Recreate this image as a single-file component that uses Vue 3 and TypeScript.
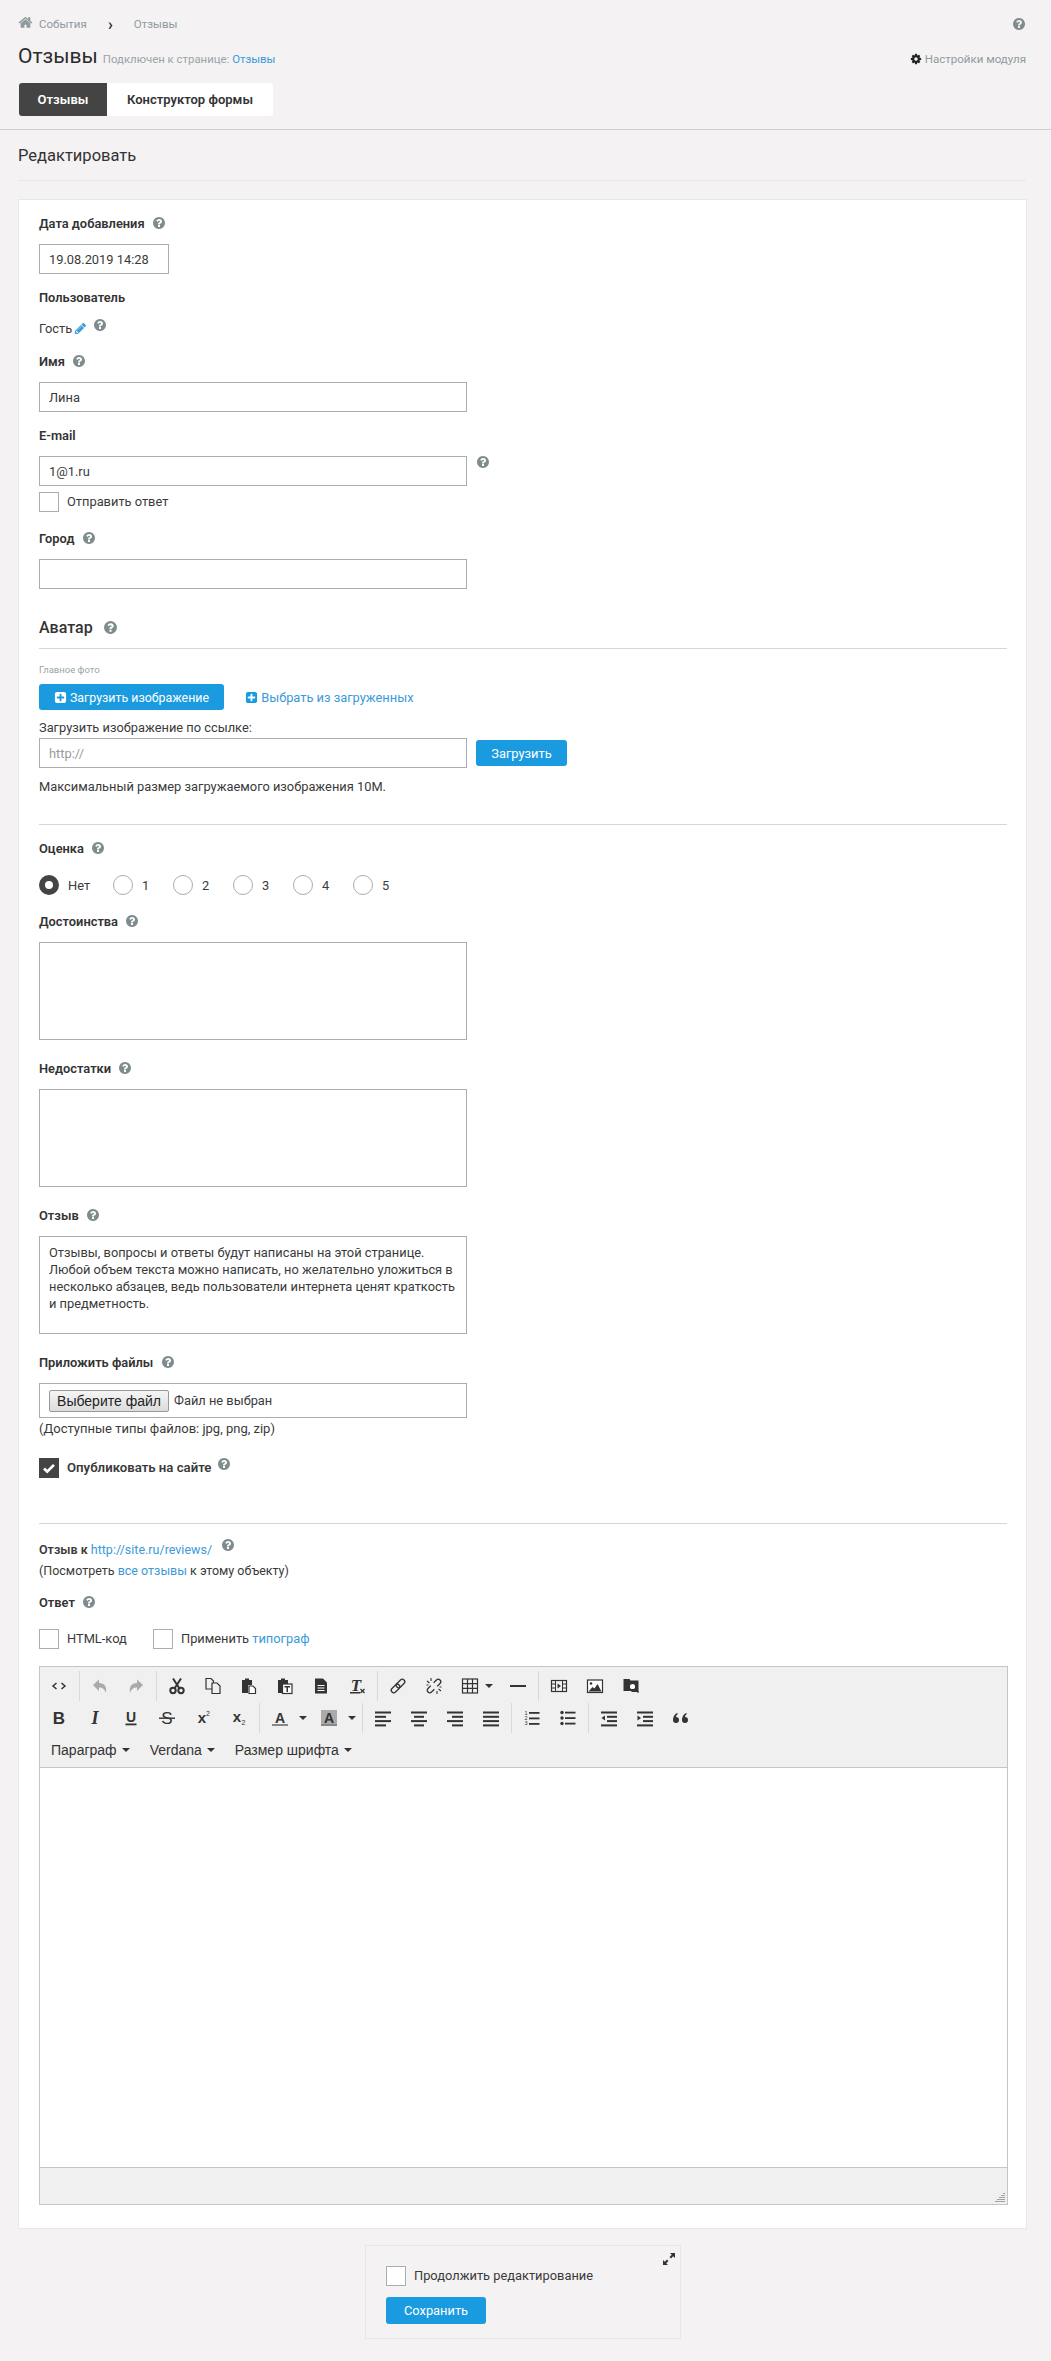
<script setup lang="ts">
const helpPath =
  'M1024 1376v-192q0-14-9-23t-23-9h-192q-14 0-23 9t-9 23v192q0 14 9 23t23 9h192q14 0 23-9t9-23zm256-672q0-88-55.500-163t-138.500-116-170-41q-243 0-371 213-15 24 8 42l132 100q7 6 19 6 16 0 25-12 53-68 86-92 34-24 86-24 48 0 85.500 26t37.500 59q0 38-20 61t-68 45q-63 28-115.500 86.500t-52.500 125.500v36q0 14 9 23t23 9h192q14 0 23-9t9-23q0-19 21.500-49.500t54.500-49.500q32-18 49-28.500t46-35 44.500-48 28-60.500 12.500-81zm384 192q0 209-103 385.500t-279.500 279.500-385.500 103-385.500-103-279.500-279.500-103-385.500 103-385.500 279.500-279.500 385.500-103 385.500 103 279.500 279.500 103 385.500z'
const homePath =
  'M1472 992v480q0 26-19 45t-45 19h-384v-384h-256v384h-384q-26 0-45-19t-19-45v-480q0-1 .5-3t.5-3l575-474 575 474q1 2 1 6zm223-69l-62 74q-8 9-21 11h-3q-13 0-21-7l-692-577-692 577q-12 8-24 7-13-2-21-11l-62-74q-8-10-7-23.500t11-21.500l719-599q32-26 76-26t76 26l244 204v-195q0-14 9-23t23-9h192q14 0 23 9t9 23v408l219 182q10 8 11 21.500t-7 23.500z'
const cogPath =
  'M1152 896q0-106-75-181t-181-75-181 75-75 181 75 181 181 75 181-75 75-181zm512-109v222q0 12-8 23t-20 13l-185 28q-19 54-39 91 35 50 107 138 10 12 10 25t-9 23q-27 37-99 108t-94 71q-12 0-26-9l-138-108q-44 23-91 38-16 136-29 186-7 28-36 28h-222q-14 0-24.500-8.500t-11.500-21.500l-28-184q-49-16-90-37l-141 107q-10 9-25 9-14 0-25-11-126-114-165-168-7-10-7-23 0-12 8-23 15-21 51-66.500t54-70.500q-27-50-41-99l-183-27q-13-2-21-12.500t-8-23.500v-222q0-12 8-23t19-13l186-28q14-46 39-92-40-57-107-138-10-12-10-24 0-10 9-23 26-36 98.500-107.500t94.500-71.500q13 0 26 10l138 107q44-23 91-38 16-136 29-186 7-28 36-28h222q14 0 24.500 8.500t11.500 21.500l28 184q49 16 90 37l142-107q9-9 24-9 13 0 25 10 129 119 165 170 7 8 7 22 0 12-8 23-15 21-51 66.500t-54 70.500q26 50 41 98l183 28q13 2 21 12.500t8 23.500z'
const pencilPath =
  'M491 1536l91-91-235-235-91 91v107h128v128h107zm523-928q0-22-22-22-10 0-17 7l-542 542q-7 7-7 17 0 22 22 22 10 0 17-7l542-542q7-7 7-17zm-54-192l416 416-832 832h-416v-416zm683 96q0 53-37 90l-166 166-416-416 166-165q36-38 90-38 53 0 91 38l235 234q37 39 37 91z'
const plusPath =
  'M1408 960v-128q0-26-19-45t-45-19h-320v-320q0-26-19-45t-45-19h-128q-26 0-45 19t-19 45v320h-320q-26 0-45 19t-19 45v128q0 26 19 45t45 19h320v320q0 26 19 45t45 19h128q26 0 45-19t19-45v-320h320q26 0 45-19t19-45zm256-544v960q0 119-84.500 203.500t-203.500 84.500h-960q-119 0-203.500-84.500t-84.500-203.500v-960q0-119 84.500-203.500t203.500-84.500h960q119 0 203.500 84.500t84.500 203.500z'

const reviewText =
  'Отзывы, вопросы и ответы будут написаны на этой странице.\n' +
  'Любой объем текста можно написать, но желательно уложиться в\n' +
  'несколько абзацев, ведь пользователи интернета ценят краткость\n' +
  'и предметность.'

const ratings = ['1', '2', '3', '4', '5']

const bars = (rows: Array<[number, number]>) =>
  rows.map(([x, w], i) => `<rect x="${x}" y="${3.5 + i * 4.3}" width="${w}" height="2" fill="#333"/>`).join('')

const letter = (ch: string, extra = '') =>
  `<text x="10" y="15.500" text-anchor="middle" font-family="Liberation Sans, sans-serif" font-size="17" fill="#333" ${extra}>${ch}</text>`

const clip = '<path d="M3 4h3V2.500h4V4h3v5H9v8H3z" fill="#333"/>'

const icons: Record<string, string> = {
  code: '<path d="M7.500 7 4 10l3.500 3M12.500 7 16 10l-3.500 3" fill="none" stroke="#333" stroke-width="1.500"/>',
  undo: '<path d="M3 9l6-5.500V7c5.500 0 8 3.500 7 10-1.500-4-3.500-5.500-7-5.500V15z" fill="#aaa"/>',
  redo: '<path d="M17 9l-6-5.500V7C5.500 7 3 10.500 4 17c1.500-4 3.500-5.500 7-5.500V15z" fill="#aaa"/>',
  cut: '<g fill="none" stroke="#333" stroke-width="2"><circle cx="6" cy="14.500" r="2.700"/><circle cx="14" cy="14.500" r="2.700"/><path d="M7.500 12.500 14 2.500M12.500 12.500 6 2.500"/></g>',
  copy: '<g fill="#f0f0f0" stroke="#333" stroke-width="1.200"><path d="M3 2.500h5l2.500 2.500v8H3z"/><path d="M9 7h5l3 3v7.500H9z"/></g>',
  paste: clip + '<path d="M10 10h4l2.500 2.500V17.500H10z" fill="#fff" stroke="#333" stroke-width="1.200"/>',
  pastetext:
    clip +
    '<rect x="7.500" y="8" width="9.500" height="9.500" fill="#fff" stroke="#333" stroke-width="1.200"/><path d="M9.500 10h5.500v1.500h-2V16h-1.500v-4.500h-2z" fill="#333"/>',
  doc: '<path d="M4 2.500h8l4 4v11H4z" fill="#333"/><path d="M6.500 9.500h7M6.500 12h7M6.500 14.500h7" stroke="#fff" stroke-width="1.200"/>',
  clear:
    '<text x="9" y="14.500" text-anchor="middle" font-family="Liberation Serif, serif" font-style="italic" font-weight="bold" font-size="17" fill="#333">T</text><rect x="3" y="16" width="10" height="1.500" fill="#333"/><path d="M13.500 13l4 4M17.500 13l-4 4" stroke="#333" stroke-width="1.300"/>',
  link: '<g transform="rotate(-45 10 10)" fill="none" stroke="#333" stroke-width="1.300"><rect x="1.500" y="7.500" width="10" height="5" rx="2.500"/><rect x="8.500" y="7.500" width="10" height="5" rx="2.500"/></g>',
  unlink:
    '<g transform="rotate(-45 10 10)" fill="none" stroke="#333" stroke-width="1.300"><path d="M8 7.500H4a2.500 2.500 0 0 0 0 5h4M12 7.500h4a2.500 2.500 0 0 1 0 5h-4"/></g><path d="M3 5l2.500 2M7 2v3M13 18v-3M17 15l-2.500-2M2.500 9h2M15.500 11h2" stroke="#333" stroke-width="1.100"/>',
  table:
    '<g fill="none" stroke="#333" stroke-width="1.200"><rect x="2.500" y="3" width="15" height="14"/><path d="M2.500 7.700h15M2.500 12.300h15M7.500 3v14M12.500 3v14"/></g>',
  hr: '<rect x="2" y="9" width="16" height="2" fill="#333"/>',
  video:
    '<rect x="2.500" y="4.500" width="15" height="11" fill="none" stroke="#333" stroke-width="1.200"/><path d="M6.500 4.500v11M13.500 4.500v11M2.500 8h4M2.500 12h4M13.500 8h4M13.500 12h4" stroke="#333"/><path d="M8.500 7.500l3.500 2.500-3.500 2.500z" fill="#333"/>',
  image:
    '<rect x="2.500" y="4" width="15" height="12.500" fill="#fff" stroke="#333" stroke-width="1.200"/><circle cx="6" cy="7.500" r="1.300" fill="#333"/><path d="M3.500 15.500l4-4.500 2 1.500 3-4.500 4 7.500z" fill="#333"/>',
  folder:
    '<path d="M2.500 4V3h6l1 1.500h8V16H11l-1-1H2.500z" fill="#333"/><circle cx="11.500" cy="10.500" r="3.200" fill="#fff" stroke="#333" stroke-width="1.200"/><path d="M14 13l3.500 3.500" stroke="#333" stroke-width="1.600"/>',
  bold: letter('B', 'font-weight="bold"'),
  italic:
    '<text x="10" y="15.500" text-anchor="middle" font-family="Liberation Serif, serif" font-style="italic" font-weight="bold" font-size="18" fill="#333">I</text>',
  underline:
    '<text x="10" y="13.500" text-anchor="middle" font-family="Liberation Sans, sans-serif" font-size="14" font-weight="bold" fill="#333">U</text><rect x="4.500" y="15.500" width="11" height="1.800" fill="#333"/>',
  strike: letter('S') + '<rect x="2" y="9.500" width="16" height="1.400" fill="#333"/>',
  sup: '<text x="9" y="15" text-anchor="middle" font-family="Liberation Sans, sans-serif" font-size="15" font-weight="bold" fill="#333">x</text><text x="15" y="8" font-family="Liberation Sans, sans-serif" text-anchor="middle" font-size="7" fill="#333">2</text>',
  sub: '<text x="8" y="14" text-anchor="middle" font-family="Liberation Sans, sans-serif" font-size="15" font-weight="bold" fill="#333">x</text><text x="14.500" y="17" font-family="Liberation Sans, sans-serif" text-anchor="middle" font-size="7" fill="#333">2</text>',
  forecolor:
    '<text x="10" y="14.500" text-anchor="middle" font-family="Liberation Sans, sans-serif" font-size="14" font-weight="bold" fill="#333">A</text><rect x="2" y="16" width="16" height="2" fill="#888"/>',
  backcolor:
    '<rect x="2" y="2" width="16" height="16" fill="#aaa"/><text x="10" y="14.500" text-anchor="middle" font-family="Liberation Sans, sans-serif" font-size="14" font-weight="bold" fill="#333">A</text><rect x="2" y="16" width="16" height="2" fill="#888"/>',
  alignleft: bars([[2, 16], [2, 11], [2, 16], [2, 11]]),
  aligncenter: bars([[2, 16], [5, 10], [2, 16], [5, 10]]),
  alignright: bars([[2, 16], [7, 11], [2, 16], [7, 11]]),
  justify: bars([[2, 16], [2, 16], [2, 16], [2, 16]]),
  ol: '<g font-family="Liberation Sans, sans-serif" font-size="5.500" fill="#333"><text x="2.500" y="7">1</text><text x="2.500" y="12">2</text><text x="2.500" y="17">3</text></g><rect x="7" y="4" width="10.500" height="1.800" fill="#333"/><rect x="7" y="9.500" width="10.500" height="1.800" fill="#333"/><rect x="7" y="15" width="10.500" height="1.800" fill="#333"/>',
  ul: '<circle cx="4" cy="4.500" r="1.700" fill="#333"/><circle cx="4" cy="10" r="1.700" fill="#333"/><circle cx="4" cy="15.500" r="1.700" fill="#333"/><rect x="7" y="3.700" width="10.500" height="1.800" fill="#333"/><rect x="7" y="9.200" width="10.500" height="1.800" fill="#333"/><rect x="7" y="14.700" width="10.500" height="1.800" fill="#333"/>',
  outdent: bars([[2, 16], [8, 10], [8, 10], [2, 16]]) + '<path d="M6 7.500v5L2.500 10z" fill="#333"/>',
  indent: bars([[2, 16], [8, 10], [8, 10], [2, 16]]) + '<path d="M2.500 7.500v5L6 10z" fill="#333"/>',
  quote:
    '<path d="M6 5C3.500 6.500 2 8.500 2 12a3 3 0 1 0 3-3c.2-1.500.8-2.500 2-3.300zM15 5c-2.500 1.500-4 3.500-4 7a3 3 0 1 0 3-3c.2-1.500.8-2.500 2-3.300z" fill="#333"/>'
}

type Tool = { icon?: string; caret?: boolean; split?: boolean }

const sep: Tool = {}
const t = (icon: string, caret = false, split = false): Tool => ({ icon, caret, split })

const toolRows: Tool[][] = [
  [
    t('code'), sep, t('undo'), t('redo'), sep, t('cut'), t('copy'), t('paste'), t('pastetext'), t('doc'), t('clear'), sep,
    t('link'), t('unlink'), t('table', true), t('hr'), sep, t('video'), t('image'), t('folder')
  ],
  [
    t('bold'), t('italic'), t('underline'), t('strike'), t('sup'), t('sub'), sep, t('forecolor', true, true),
    t('backcolor', true, true), sep, t('alignleft'), t('aligncenter'), t('alignright'), t('justify'), sep, t('ol'), t('ul'), sep,
    t('outdent'), t('indent'), t('quote')
  ]
]

const menus = ['Параграф', 'Verdana', 'Размер шрифта']
</script>

<template>
  <div class="page">
    <header class="top">
      <div class="crumbs">
        <svg class="home" viewBox="0 0 1792 1792"><path :d="homePath" /></svg>
        <span>События</span>
        <b class="crumb-arrow">›</b>
        <span>Отзывы</span>
        <svg class="help crumbs-help" viewBox="0 0 1792 1792"><path :d="helpPath" /></svg>
      </div>
      <div class="title-row">
        <h1>Отзывы</h1>
        <span class="subtitle">Подключен к странице: <a>Отзывы</a></span>
        <span class="settings">
          <svg viewBox="0 0 1792 1792"><path :d="cogPath" /></svg>
          Настройки модуля
        </span>
      </div>
      <nav class="tabs">
        <span class="tab tab-active">Отзывы</span>
        <span class="tab">Конструктор формы</span>
      </nav>
    </header>

    <main class="content">
      <h2>Редактировать</h2>

      <section class="card">
        <label class="lbl">Дата добавления <svg class="help" viewBox="0 0 1792 1792"><path :d="helpPath" /></svg></label>
        <input class="inp date" value="19.08.2019 14:28" />

        <label class="lbl">Пользователь</label>
        <div class="user">
          Гость
          <svg class="pencil" viewBox="0 0 1792 1792"><path :d="pencilPath" /></svg>
          <svg class="help raised" viewBox="0 0 1792 1792"><path :d="helpPath" /></svg>
        </div>

        <label class="lbl">Имя <svg class="help" viewBox="0 0 1792 1792"><path :d="helpPath" /></svg></label>
        <input class="inp" value="Лина" />

        <label class="lbl">E-mail</label>
        <div class="with-help">
          <input class="inp" value="1@1.ru" />
          <svg class="help" viewBox="0 0 1792 1792"><path :d="helpPath" /></svg>
        </div>
        <div class="check send"><i class="box"></i>Отправить ответ</div>

        <label class="lbl city">Город <svg class="help" viewBox="0 0 1792 1792"><path :d="helpPath" /></svg></label>
        <input class="inp" />

        <h3 class="section-title">Аватар <svg class="help" viewBox="0 0 1792 1792"><path :d="helpPath" /></svg></h3>
        <div class="photo-label">Главное фото</div>
        <div class="upload-row">
          <button class="btn upload" type="button">
            <svg viewBox="0 0 1792 1792"><path :d="plusPath" /></svg>
            Загрузить изображение
          </button>
          <a class="pick">
            <svg viewBox="0 0 1792 1792"><path :d="plusPath" /></svg>
            Выбрать из загруженных
          </a>
        </div>
        <div class="url-label">Загрузить изображение по ссылке:</div>
        <div class="url-row">
          <input class="inp" placeholder="http://" />
          <button class="btn url-btn" type="button">Загрузить</button>
        </div>
        <div class="max-size">Максимальный размер загружаемого изображения 10М.</div>
        <hr class="rule rule-rating" />

        <label class="lbl rating-lbl">Оценка <svg class="help" viewBox="0 0 1792 1792"><path :d="helpPath" /></svg></label>
        <div class="radios">
          <span class="radio-item none"><i class="radio on"></i>Нет</span>
          <span v-for="r in ratings" :key="r" class="radio-item"><i class="radio"></i>{{ r }}</span>
        </div>

        <label class="lbl pros">Достоинства <svg class="help" viewBox="0 0 1792 1792"><path :d="helpPath" /></svg></label>
        <textarea class="inp area"></textarea>

        <label class="lbl after-area">Недостатки <svg class="help" viewBox="0 0 1792 1792"><path :d="helpPath" /></svg></label>
        <textarea class="inp area"></textarea>

        <label class="lbl after-area">Отзыв <svg class="help" viewBox="0 0 1792 1792"><path :d="helpPath" /></svg></label>
        <textarea class="inp area" wrap="off" :value="reviewText"></textarea>

        <label class="lbl after-area">Приложить файлы <svg class="help" viewBox="0 0 1792 1792"><path :d="helpPath" /></svg></label>
        <div class="file-box">
          <button class="file-btn" type="button">Выберите файл</button>
          <span>Файл не выбран</span>
        </div>
        <div class="note">(Доступные типы файлов: jpg, png, zip)</div>
        <div class="check publish">
          <i class="box checked">
            <svg viewBox="0 0 20 20"><path d="M4.500 10.500l3.500 3.500 7.500-7.500" fill="none" stroke="#fff" stroke-width="3" /></svg>
          </i>
          <b>Опубликовать на сайте</b>
          <svg class="help raised" viewBox="0 0 1792 1792"><path :d="helpPath" /></svg>
        </div>
        <hr class="rule rule-review" />

        <div class="line review-to"><b>Отзыв к</b> <a>http://site.ru/reviews/</a> <svg class="help raised" viewBox="0 0 1792 1792"><path :d="helpPath" /></svg></div>
        <div class="line">(Посмотреть <a>все отзывы</a> к этому объекту)</div>

        <label class="lbl answer">Ответ <svg class="help" viewBox="0 0 1792 1792"><path :d="helpPath" /></svg></label>
        <div class="answer-opts">
          <span class="check"><i class="box"></i>HTML-код</span>
          <span class="check"><i class="box"></i>Применить&nbsp;<a>типограф</a></span>
        </div>

        <div class="editor">
          <div class="toolbar">
            <div v-for="(row, ri) in toolRows" :key="ri" class="tool-row">
              <template v-for="(tool, ti) in row" :key="ti">
                <span v-if="!tool.icon" class="tool-sep"></span>
                <span v-else class="tool" :class="{ 'has-caret': tool.caret, split: tool.split }">
                  <svg viewBox="0 0 20 20" v-html="icons[tool.icon]"></svg>
                  <i v-if="tool.caret" class="caret"></i>
                </span>
              </template>
            </div>
            <div class="tool-row menus">
              <span v-for="m in menus" :key="m" class="menu">{{ m }}<i class="caret"></i></span>
            </div>
          </div>
          <div class="edit-area"></div>
          <div class="statusbar">
            <svg class="grip" viewBox="0 0 10 10">
              <path d="M9 1v1M7 3v1M9 3v1M5 5v1M7 5v1M9 5v1M3 7v1M5 7v1M7 7v1M9 7v1M1 9v1M3 9v1M5 9v1M7 9v1M9 9v1" stroke="#555" stroke-width="1" />
            </svg>
          </div>
        </div>
      </section>

      <div class="save-box">
        <svg class="expand" viewBox="0 0 14 14">
          <path d="M8 1h5v5l-1.800-1.800L9 6.500 7.500 5l2.300-2.300zM6 13H1V8l1.800 1.800L5 7.500 6.500 9l-2.300 2.300z" fill="#333" />
        </svg>
        <div class="check"><i class="box"></i>Продолжить редактирование</div>
        <button class="btn save" type="button">Сохранить</button>
      </div>
    </main>
  </div>
</template>

<style>
html,
body {
  margin: 0;
  background: #f4f2f3;
}
</style>

<style scoped>
.page {
  height: 2361px;
  overflow: hidden;
  background: #f4f2f3;
  font-family: Roboto, 'Noto Sans', sans-serif;
  font-size: 12.85px;
  color: #3a3a3a;
}

a {
  color: #3a9ad9;
}

.top {
  padding: 14px 25px 13px 18px;
  border-bottom: 1px solid #cfcfcf;
}

.crumbs {
  display: flex;
  align-items: center;
  height: 20px;
  font-size: 11.5px;
  color: #8f9a9f;
}

.home {
  width: 15px;
  height: 15px;
  margin: -3px 6px 0 0;
  fill: #8f9a9f;
}

.crumb-arrow {
  width: 47px;
  text-align: center;
  font-size: 16px;
  color: #333;
}

.help.crumbs-help {
  margin-left: auto;
  margin-right: 0;
}

.title-row {
  display: flex;
  align-items: baseline;
  margin-top: 7px;
  height: 30px;
}

h1 {
  margin: 0 5px 0 0;
  font-size: 21px;
  font-weight: 400;
  line-height: 30px;
  color: #2b2b2b;
}

.subtitle {
  font-size: 11.4px;
  color: #9aa4a8;
}

.settings {
  margin-left: auto;
  font-size: 11.5px;
  color: #8f9a9f;
}

.settings svg {
  width: 12px;
  height: 12px;
  vertical-align: -2px;
  fill: #222;
}

.tabs {
  display: inline-flex;
  margin: 12px 0 0 1px;
  height: 33px;
  background: #fff;
  border-radius: 3px;
  overflow: hidden;
  vertical-align: top;
}

.tab {
  display: flex;
  align-items: center;
  justify-content: center;
  width: 166px;
  font-size: 13px;
  font-weight: 600;
  color: #333;
}

.tab-active {
  width: 88px;
  background: #444;
  color: #fff;
}

.content {
  padding: 14px 24px 0 18px;
}

h2 {
  width: 1008px;
  margin: 0;
  padding-bottom: 12px;
  border-bottom: 1px solid #e8e6e7;
  font-size: 16.5px;
  font-weight: 400;
  line-height: 24px;
  color: #333;
}

.card {
  box-sizing: border-box;
  width: 1009px;
  height: 2030px;
  margin-top: 18px;
  padding: 0 19px 0 20px;
  background: #fff;
  border: 1px solid #e8e8e8;
}

.lbl {
  display: block;
  margin: 14px 0 10px;
  font-size: 12.85px;
  font-weight: 600;
  line-height: 20px;
  color: #333;
}

.help {
  display: inline-block;
  width: 14px;
  height: 14px;
  margin-left: 4px;
  vertical-align: -2px;
  fill: #7f8c8d;
}

.help.raised {
  vertical-align: 2px;
  margin-left: 6px;
}

.inp {
  display: block;
  box-sizing: border-box;
  width: 428px;
  height: 30px;
  margin: 0;
  padding: 0 9px;
  background: #fff;
  border: 1px solid #a8adad;
  border-radius: 0;
  outline: none;
  font: inherit;
  color: #3a3a3a;
}

.inp::placeholder {
  color: #999;
}

.date {
  width: 130px;
}

.user {
  display: flex;
  align-items: center;
  height: 20px;
}

.pencil {
  width: 13px;
  height: 13px;
  margin-left: 2px;
  fill: #3a9ad9;
}

.user .help {
  margin-left: 6px;
  margin-top: -7px;
}

.with-help {
  display: flex;
}

.with-help .help {
  margin: -1px 0 0 9px;
}

.check {
  display: flex;
  align-items: center;
  line-height: 20px;
}

.box {
  box-sizing: border-box;
  flex: none;
  width: 20px;
  height: 20px;
  margin-right: 8px;
  background: #fff;
  border: 1px solid #a8adad;
}

.box.checked {
  background: #444;
  border-color: #444;
}

.box svg {
  display: block;
  width: 18px;
  height: 18px;
}

.send {
  margin-top: 6px;
}

.lbl.city {
  margin-top: 17px;
}

.section-title {
  margin: 27px 0 0;
  padding-bottom: 8px;
  border-bottom: 1px solid #d9d6d8;
  font-size: 16px;
  font-weight: 500;
  line-height: 24px;
  color: #333;
}

.section-title .help {
  width: 15px;
  height: 15px;
  margin-left: 6px;
}

.photo-label {
  margin-top: 14px;
  font-size: 9.5px;
  line-height: 14px;
  color: #9aa4a8;
}

.upload-row {
  display: flex;
  align-items: center;
  margin-top: 7px;
}

.btn {
  padding: 0;
  border: 0;
  border-radius: 3px;
  background: #1b9bdf;
  color: #fff;
  font: inherit;
}

.btn svg {
  width: 13px;
  height: 13px;
  vertical-align: -2px;
  fill: #fff;
}

.upload {
  width: 185px;
  height: 26px;
  font-size: 12.4px;
}

.pick {
  margin-left: 21px;
}

.pick svg {
  width: 13px;
  height: 13px;
  vertical-align: -2px;
  fill: #1b9bdf;
}

.url-label {
  margin-top: 8px;
  line-height: 20px;
}

.url-row {
  display: flex;
  align-items: center;
}

.url-btn {
  width: 91px;
  height: 26px;
  margin-left: 9px;
}

.max-size {
  margin-top: 9px;
  line-height: 20px;
}

.rule {
  height: 0;
  margin: 0;
  border: 0;
  border-top: 1px solid #d9d6d8;
}

.rule-rating {
  margin-top: 27px;
}

.lbl.rating-lbl {
  margin-bottom: 16px;
}

.radios {
  display: flex;
  height: 20px;
}

.radio-item {
  display: flex;
  align-items: center;
  width: 60px;
}

.radio-item.none {
  width: 74px;
}

.radio {
  box-sizing: border-box;
  width: 20px;
  height: 20px;
  margin-right: 9px;
  border: 1px solid #a8adad;
  border-radius: 50%;
  background: #fff;
}

.radio.on {
  border: 6px solid #444;
}

.lbl.pros {
  margin-top: 17px;
}

.area {
  height: 98px;
  padding: 7px 9px;
  line-height: 17px;
  resize: none;
  overflow: hidden;
}

.lbl.after-area {
  margin-top: 19px;
}

.file-box {
  box-sizing: border-box;
  display: flex;
  align-items: center;
  width: 428px;
  height: 35px;
  padding-left: 9px;
  border: 1px solid #a8adad;
}

.file-btn {
  box-sizing: border-box;
  width: 120px;
  height: 22px;
  margin-right: 5px;
  padding: 0;
  background: linear-gradient(#f5f5f5, #dcdcdc);
  border: 1px solid #999;
  border-radius: 2px;
  font-family: 'Liberation Sans', Arial, sans-serif;
  font-size: 14px;
  color: #222;
}

.note {
  margin-top: 1px;
  font-size: 13px;
  line-height: 20px;
}

.publish {
  margin-top: 19px;
}

.publish b {
  font-size: 13.2px;
  font-weight: 600;
}

.publish .help {
  margin-top: -8px;
}

.rule-review {
  margin-top: 45px;
}

.line {
  font-size: 12.5px;
  line-height: 21px;
}

.line b {
  font-weight: 600;
}

.review-to {
  margin-top: 14px;
}

.lbl.answer {
  margin-top: 12px;
  margin-bottom: 16px;
}

.answer-opts {
  display: flex;
  height: 20px;
}

.answer-opts .check:first-child {
  width: 114px;
}

.editor {
  box-sizing: border-box;
  display: flex;
  flex-direction: column;
  width: 969px;
  height: 539px;
  margin-top: 17px;
  border: 1px solid #c5c5c5;
}

.toolbar {
  box-sizing: border-box;
  height: 101px;
  padding: 4px 0 0 1px;
  background: #f0f0f0;
  border-bottom: 1px solid #c5c5c5;
}

.tool-row {
  display: flex;
  height: 32px;
}

.tool {
  display: flex;
  align-items: center;
  justify-content: center;
  width: 36px;
  height: 30px;
}

.tool svg {
  width: 20px;
  height: 20px;
}

.tool.has-caret {
  box-sizing: border-box;
  width: 48px;
  justify-content: flex-start;
  padding-left: 8px;
}

.tool.split {
  width: 49px;
}

.tool .caret {
  margin-left: 5px;
}

.tool.split .caret {
  margin-left: 9px;
}

.tool-sep {
  width: 1px;
  height: 30px;
  margin: 0 2px;
  background: #d9d9d9;
}

.caret {
  display: inline-block;
  width: 0;
  height: 0;
  border-top: 4px solid #333;
  border-left: 4px solid transparent;
  border-right: 4px solid transparent;
}

.menus {
  align-items: center;
  height: 30px;
  font-family: 'Liberation Sans', Arial, sans-serif;
  font-size: 14px;
}

.menu {
  display: flex;
  align-items: center;
  padding: 0 10px;
  color: #333;
}

.menu .caret {
  margin-left: 5px;
}

.edit-area {
  flex: 1;
  background: #fff;
}

.statusbar {
  position: relative;
  height: 36px;
  background: #f0f0f0;
  border-top: 1px solid #c5c5c5;
}

.grip {
  position: absolute;
  right: 2px;
  bottom: 2px;
  width: 10px;
  height: 10px;
}

.save-box {
  position: relative;
  box-sizing: border-box;
  width: 316px;
  height: 94px;
  margin: 16px 0 0 347px;
  padding: 20px 20px 0;
  border: 1px solid #e8e6e7;
}

.expand {
  position: absolute;
  top: 6px;
  right: 4px;
  width: 14px;
  height: 14px;
}

.save {
  display: block;
  width: 100px;
  height: 27px;
  margin-top: 11px;
}
</style>
